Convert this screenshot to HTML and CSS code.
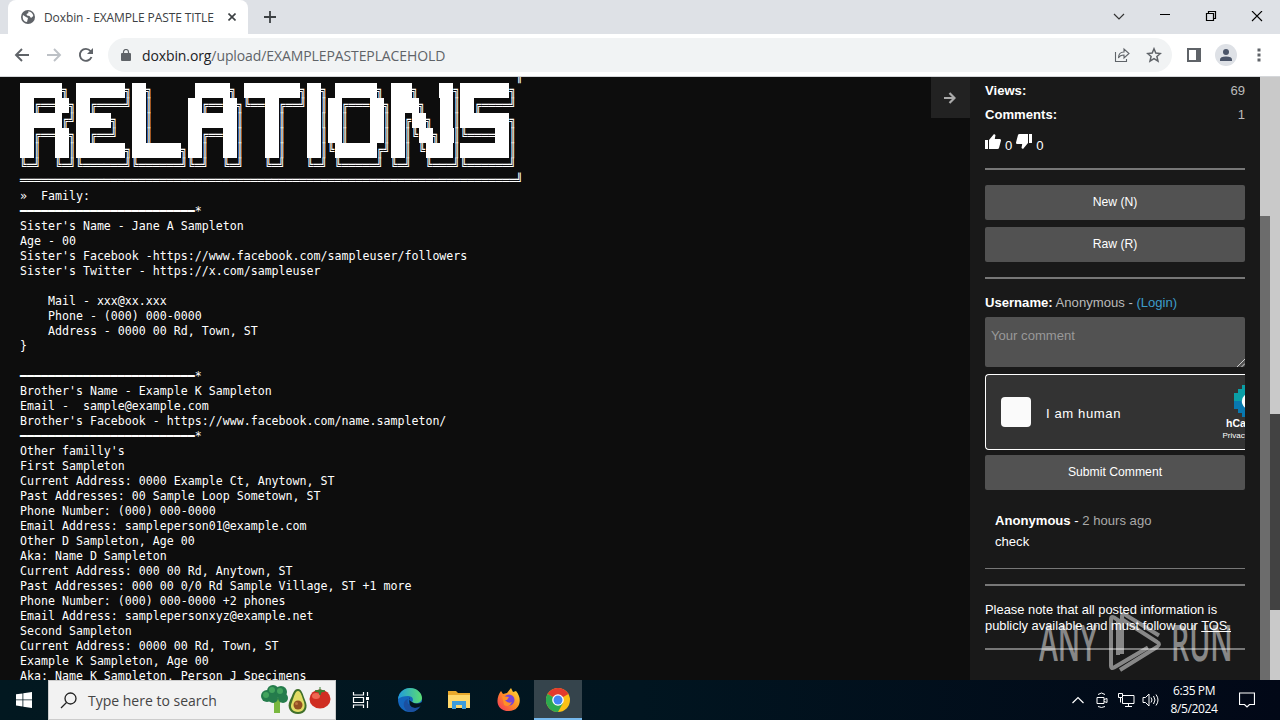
FILE: index.html
```html
<!DOCTYPE html>
<html lang="en">
<head>
    <meta charset="UTF-8">
    <title>Doxbin</title>
    <link rel="stylesheet" href="styles.css">
</head>
<body>
    <div class="tabstrip">
        <div class="tab">
            <svg width="14" height="14" viewBox="0 0 14 14"><circle cx="7" cy="7" r="7" fill="#5f6368"/><path d="M2 5l3 2 2 1-1 4C3 12 1 9 2 5zM7 1.500c3 0 5 2 5.300 4.500L10 8 8.500 6 6 5.500 5.500 4 7.500 3z" fill="#fff"/></svg>
            <span class="tab-title">Doxbin - EXAMPLE PASTE TITLE</span>
            <svg width="8" height="8" viewBox="0 0 8 8"><path d="M.5.5l7 7M7.500.5l-7 7" stroke="#3c4043" stroke-width="1.600"/></svg>
        </div>
        <svg class="new-tab" width="12" height="12" viewBox="0 0 12 12"><path d="M6 0v12M0 6h12" stroke="#3c4043" stroke-width="1.800"/></svg>
        <div class="window-buttons">
            <svg width="12" height="12" viewBox="0 0 12 12"><path d="M1 3l5 5 5-5" fill="none" stroke="#333" stroke-width="1.200"/></svg>
            <svg width="12" height="12" viewBox="0 0 12 12"><path d="M1 3.500h10" stroke="#000"/></svg>
            <svg width="12" height="12" viewBox="0 0 12 12"><path d="M1.500 2.500h7v7h-7zM3.500 2.500v-2h7v7h-2" fill="none" stroke="#000" stroke-width="1.200"/></svg>
            <svg width="12" height="12" viewBox="0 0 12 12"><path d="M1 0l10 10M11 0L1 10" stroke="#000" stroke-width="1.100"/></svg>
        </div>
    </div>
    <div class="toolbar">
        <div class="nav">
            <svg width="16" height="16" viewBox="0 0 16 16"><path d="M15 8H2M8 2L2 8l6 6" fill="none" stroke="#5f6368" stroke-width="1.900"/></svg>
            <svg width="16" height="16" viewBox="0 0 16 16"><path d="M1 8h13M8 2l6 6-6 6" fill="none" stroke="#bdc1c6" stroke-width="1.900"/></svg>
            <svg width="16" height="16" viewBox="0 0 16 16"><path d="M13.500 10A6 6 0 1 1 12.500 4L14 5.500" fill="none" stroke="#5f6368" stroke-width="1.900"/><path d="M15 1v6H9z" fill="#5f6368"/></svg>
        </div>
        <div class="address">
            <svg width="10" height="12" viewBox="0 0 10 12"><path d="M1 4h8q1 0 1 1v6q0 1-1 1H1q-1 0-1-1V5q0-1 1-1z" fill="#5f6368"/><path d="M2.500 5V3a2.500 2.500 0 0 1 5 0v2" fill="none" stroke="#5f6368" stroke-width="1.200"/></svg>
            <span class="url"><b>doxbin.org</b>/upload/EXAMPLEPASTEPLACEHOLD</span>
            <svg width="16" height="16" viewBox="0 0 16 16"><path d="M1.500 5v9.500h11V12M4.500 11q0-6 5.500-6V2l5 4.500-5 4.500V8q-4 0-5.500 3z" fill="none" stroke="#5f6368" stroke-width="1.100"/></svg>
            <svg width="16" height="16" viewBox="0 0 16 16"><path d="M8 1.800l1.800 4.300 4.600.4-3.500 3 1.100 4.600-4-2.500-4 2.500 1.100-4.600-3.500-3 4.600-.4z" fill="none" stroke="#5f6368" stroke-width="1.500"/></svg>
        </div>
        <svg class="panel-icon" width="14" height="14" viewBox="0 0 14 14"><path d="M1 1h12v12H1z" fill="none" stroke="#5f6368" stroke-width="2"/><path d="M9 0h5v14H9z" fill="#5f6368"/></svg>
        <svg class="avatar" width="22" height="22" viewBox="0 0 22 22"><circle cx="11" cy="11" r="11" fill="#dee1e6"/><circle cx="11" cy="8" r="3" fill="#4a5468"/><path d="M5 17v-1.500q0-3 6-3t6 3V17z" fill="#4a5468"/></svg>
        <svg width="4" height="14" viewBox="0 0 4 14"><path d="M.5.5h3v3h-3zM.5 5.500h3v3h-3zM.5 10.500h3v3h-3z" fill="#5f6368"/></svg>
    </div>

    <div class="page">
        <div class="paste">
<pre class="banner">                                                                       ║
██████╗ ███████╗██╗      █████╗ ████████╗██╗ ██████╗ ███╗   ██╗███████╗
██╔══██╗██╔════╝██║     ██╔══██╗╚══██╔══╝██║██╔═══██╗████╗  ██║██╔════╝
██████╔╝█████╗  ██║     ███████║   ██║   ██║██║   ██║██╔██╗ ██║███████╗
██╔══██╗██╔══╝  ██║     ██╔══██║   ██║   ██║██║   ██║██║╚██╗██║╚════██║
██║  ██║███████╗███████╗██║  ██║   ██║   ██║╚██████╔╝██║ ╚████║███████║
╚═╝  ╚═╝╚══════╝╚══════╝╚═╝  ╚═╝   ╚═╝   ╚═╝ ╚═════╝ ╚═╝  ╚═══╝╚══════╝
═══════════════════════════════════════════════════════════════════════╝</pre>
<pre class="text">»  Family:
━━━━━━━━━━━━━━━━━━━━━━━━━*
Sister's Name - Jane A Sampleton
Age - 00
Sister's Facebook -https://www.facebook.com/sampleuser/followers
Sister's Twitter - https://x.com/sampleuser

    Mail - xxx@xx.xxx
    Phone - (000) 000-0000
    Address - 0000 00 Rd, Town, ST
}

━━━━━━━━━━━━━━━━━━━━━━━━━*
Brother's Name - Example K Sampleton
Email -  sample@example.com
Brother's Facebook - https://www.facebook.com/name.sampleton/
━━━━━━━━━━━━━━━━━━━━━━━━━*
Other familly's
First Sampleton
Current Address: 0000 Example Ct, Anytown, ST
Past Addresses: 00 Sample Loop Sometown, ST
Phone Number: (000) 000-0000
Email Address: sampleperson01@example.com
Other D Sampleton, Age 00
Aka: Name D Sampleton
Current Address: 000 00 Rd, Anytown, ST
Past Addresses: 000 00 0/0 Rd Sample Village, ST +1 more
Phone Number: (000) 000-0000 +2 phones
Email Address: samplepersonxyz@example.net
Second Sampleton
Current Address: 0000 00 Rd, Town, ST
Example K Sampleton, Age 00
Aka: Name K Sampleton, Person J Specimens</pre>
        </div>
        <div class="toggle">
            <svg width="12" height="12" viewBox="0 0 12 12"><path d="M0 6h10M5.500 1l5 5-5 5" fill="none" stroke="#aaa" stroke-width="2.200"/></svg>
        </div>
        <div class="sidebar">
            <div class="stat"><b>Views:</b><span>69</span></div>
            <div class="stat"><b>Comments:</b><span>1</span></div>
            <div class="votes">
                <svg width="16" height="16" viewBox="0 0 16 16"><path d="M0 6h3v9H0zM4 6l5-6 1.500 1-.7 4H15q1 0 1 1.500L14 14q-.3 1-1.500 1H4z" fill="#fff"/></svg>
                <span>0</span>
                <svg width="16" height="16" viewBox="0 0 16 16"><path d="M16 9h-3V0h3zM12 9l-5 6-1.500-1 .7-4H1Q0 10 0 8.500L2 1q.3-1 1.500-1H12z" fill="#fff"/></svg>
                <span>0</span>
            </div>
            <hr>
            <div class="actions">
                <div class="button">New (N)</div>
                <div class="button">Raw (R)</div>
            </div>
            <hr>
            <div class="user"><b>Username:</b> Anonymous - <a>(Login)</a></div>
            <div class="comment-box">Your comment
                <svg width="8" height="8" viewBox="0 0 8 8"><path d="M0 8l8-8M4.500 8L8 4.500" stroke="#ccc"/></svg>
            </div>
            <div class="captcha">
                <div class="check"></div>
                <span class="human">I am human</span>
                <div class="brand">
                    <svg width="32" height="32" viewBox="0 0 32 32"><path d="M8 0h16v4h4v4h4v16h-4v4h-4v4H8v-4H4v-4H0V8h4V4h4z" fill="#0a9fa6"/><path d="M0 16h8v12H4v-4H0zM8 20h8v12H8z" fill="#0878b0"/><path d="M12 9q-5 4-4 9 2 6 8 7h8V9z" fill="#fff"/></svg>
                    <b>hCaptcha</b>
                    <span>Privacy - Terms</span>
                </div>
            </div>
            <div class="button">Submit Comment</div>
            <div class="comment">
                <div><b>Anonymous</b> - <span>2 hours ago</span></div>
                <div class="body">check</div>
            </div>
            <hr class="thin">
            <hr class="second">
            <div class="note">Please note that all posted information is<br>publicly available and must follow our <u>TOS.</u></div>
            <hr class="last">
        </div>
        <div class="inner-scroll"><div class="inner-thumb"></div></div>
        <div class="outer-scroll"><div class="outer-thumb"></div></div>
        <div class="watermark">
            <span>ANY</span>
            <svg width="56" height="62" viewBox="0 0 56 62"><path d="M4 55V8q0-3 3-1.500L11 9v35M4 55q0 3 3 1.500l34-20M15 5q0-3 3-1.500l34 21M15 5v38M13 59l37-23q4-3 0-5L16 9" fill="none" stroke="#fff" stroke-width="4"/></svg>
            <span>RUN</span>
        </div>
    </div>

    <div class="taskbar">
        <div class="start">
            <svg width="16" height="16" viewBox="0 0 16 16"><path d="M0 2.300l6.500-.9v6.100H0zM7.300 1.200L16 0v7.500H7.300zM0 8.300h6.500v6.200L0 13.600zM7.300 8.300H16V16l-8.700-1.300z" fill="#fff"/></svg>
        </div>
        <div class="search">
            <svg width="17" height="17" viewBox="0 0 17 17"><circle cx="10.500" cy="6.500" r="5.500" fill="none" stroke="#222" stroke-width="1.300"/><path d="M6.500 10.500L1 16" stroke="#222" stroke-width="1.300"/></svg>
            <span>Type here to search</span>
            <svg class="food" width="72" height="32" viewBox="0 0 72 32">
                <path d="M10 14l4 5v10h6V19l5-6z" fill="#79b83f"/>
                <g fill="#257c4c"><circle cx="7" cy="12" r="6"/><circle cx="13" cy="7" r="6"/><circle cx="21" cy="8" r="6"/><circle cx="23" cy="14" r="5"/><circle cx="13" cy="14" r="5"/></g>
                <g fill="#43a35d"><circle cx="12" cy="6" r="3"/><circle cx="20" cy="7" r="3"/><circle cx="6" cy="11" r="3"/></g>
                <path d="M38 5c4 0 5 6 7 11 4 8 0 14-7 14s-12-6-8-14c3-5 3-11 8-11z" fill="#40702a"/>
                <path d="M38 7c3 0 4 6 6 11 2 6-1 10-6 10s-9-4-6-10c2-5 3-11 6-11z" fill="#e2dc65"/>
                <circle cx="38" cy="21" r="4.500" fill="#925022"/><circle cx="36.500" cy="19.500" r="1.500" fill="#bd7941"/>
                <ellipse cx="60" cy="15" rx="10.500" ry="9.500" fill="#cf2e22"/><ellipse cx="56" cy="12" rx="4" ry="3" fill="#ee6852"/>
                <path d="M60 3v4M55 7l5-1 5 1-4 1-1 3-1-3z" fill="#3a8034" stroke="#3a8034"/>
            </svg>
        </div>
        <div class="apps">
            <div class="app">
                <svg width="18" height="16" viewBox="0 0 18 16"><path d="M1.500 0v3h10V0M1.500 16v-3h10v3M1.500 5.500h10v5h-10zM15.500 0v4M15.500 9v7" fill="none" stroke="#fff" stroke-width="1.200"/><path d="M14 5h3v3h-3z" fill="#fff"/></svg>
            </div>
            <div class="app">
                <svg width="24" height="24" viewBox="0 0 24 24"><defs><linearGradient id="edge"><stop offset="0" stop-color="#209bdd"/><stop offset="1" stop-color="#5bdd72"/></linearGradient></defs><circle cx="12" cy="12" r="12" fill="#1466bd"/><path d="M0 11C1 4 6 0 12 0c7 0 12 5 12 10 0 5-7 7-10 4 2-2 1-6-4-6-4 0-8 1-10 3z" fill="url(#edge)"/><path d="M10 11c-2 5 3 9 12 7-3 6-9 7-13 5-5-4-4-11 1-12z" fill="#1b50a0"/><path d="M14 14q-4-2-2-5-3 10 5 11 4 0 7-3V14q-5 3-10 0z" fill="#04151f"/></svg>
            </div>
            <div class="app">
                <svg width="22" height="20" viewBox="0 0 22 20"><path d="M0 1h8l2 2h12v15H0z" fill="#e9a92c"/><path d="M0 5h22v13H0z" fill="#ffd86b"/><path d="M4 11h14v8h-4v-4H8v4H4z" fill="#3d9cdb"/></svg>
            </div>
            <div class="app">
                <svg width="24" height="24" viewBox="0 0 24 24"><defs><linearGradient id="fox" x1="1" y1="0" x2="0" y2="1"><stop offset="0" stop-color="#ffe436"/><stop offset=".5" stop-color="#ff8b25"/><stop offset="1" stop-color="#f22e62"/></linearGradient></defs><path d="M4 3l2 3 4-1 4-5 2 4 3-1c7 8 4 20-7 20C-1 23-2 11 4 3z" fill="url(#fox)"/><circle cx="12" cy="12" r="5.500" fill="#7844d5"/><path d="M5 8l7 1-2 3H8q3 4 7 2-3 6-8 3z" fill="#ff8f27"/></svg>
            </div>
            <div class="app active">
                <svg width="24" height="24" viewBox="0 0 24 24"><circle cx="12" cy="12" r="12" fill="#fbc116"/><path d="M12 12L1.600 6a12 12 0 0 1 20.800 0z" fill="#e33b2e"/><path d="M12 12L1.600 6A12 12 0 0 0 12 24l5-9z" fill="#2da94f"/><circle cx="12" cy="12" r="5.800" fill="#fff"/><circle cx="12" cy="12" r="4.500" fill="#4285f4"/></svg>
            </div>
        </div>
        <div class="tray">
            <svg width="12" height="16" viewBox="0 0 12 16"><path d="M.5 11L6 5.500l5.500 5.500" fill="none" stroke="#fff" stroke-width="1.200"/></svg>
            <svg width="12" height="16" viewBox="0 0 12 16"><path d="M1 5.500h7v6H1zM8 7.500l3-1v4l-3-1M2 2.500q3.500-3 7 0M2 14.500q3.500 2 7 0" fill="none" stroke="#fff"/></svg>
            <svg width="17" height="16" viewBox="0 0 17 16"><path d="M5 3.500h11v8H4.500V6M10.500 11.500v3M7 14.500h7M.5 1.500h4v4h-4zM2.500 5.500v5" fill="none" stroke="#fff"/></svg>
            <svg width="17" height="16" viewBox="0 0 17 16"><path d="M1 5.500h2.500L7 2v12l-3.500-3.500H1zM9 5.500q2 2.500 0 5M11.500 4q3 4 0 8M14 2.500q4 5.500 0 11" fill="none" stroke="#fff"/></svg>
            <div class="clock">6:35 PM<br>8/5/2024</div>
            <svg class="notice" width="16" height="16" viewBox="0 0 16 16"><path d="M.5 1h15v11.500h-5L8 15l-2.500-2.500h-5z" fill="none" stroke="#fff" stroke-width="1.200"/></svg>
        </div>
    </div>

    <script>
        // fill runs of full blocks so no seams show between them
        const banner = document.querySelector('.banner');
        banner.innerHTML = banner.textContent.replace(/█+/g, '<i>$&</i>');
    </script>
</body>
</html>
```

FILE: styles.css
```css
* {
    box-sizing: border-box;
}
body {
    margin: 0;
    width: 1280px;
    height: 720px;
    overflow: hidden;
    display: flex;
    flex-direction: column;
    font-family: "Open Sans", "Noto Sans", sans-serif;
    background: #0d0d0d;
}
svg {
    flex: none;
    display: block;
}
.tabstrip {
    height: 34px;
    background: #dee1e6;
    display: flex;
    align-items: center;
    padding-left: 8px;
}
.tab {
    width: 240px;
    height: 34px;
    background: #fff;
    border-radius: 8px 8px 0 0;
    display: flex;
    align-items: center;
    padding: 0 12px 0 13px;
}
.tab-title {
    width: 172px;
    margin: 0 14px 0 9px;
    font-size: 12px;
    letter-spacing: -0.1px;
    color: #3c4043;
    white-space: nowrap;
    overflow: hidden;
}
.new-tab {
    margin-left: 16px;
}
.window-buttons {
    margin-left: auto;
    margin-right: 17px;
    display: flex;
    gap: 34px;
}
.toolbar {
    height: 43px;
    background: #fff;
    border-bottom: 1px solid #d5d7da;
    display: flex;
    align-items: center;
    padding: 0 19px 0 14px;
}
.nav {
    display: flex;
    gap: 16px;
    width: 94px;
}
.address {
    width: 1065px;
    height: 34px;
    border-radius: 17px;
    background: #f1f3f4;
    display: flex;
    align-items: center;
    gap: 16px;
    padding: 0 10px 0 13px;
}
.url {
    flex: 1;
    margin-left: -5px;
    font-size: 14px;
    letter-spacing: -0.1px;
    color: #5f6368;
}
.url b {
    font-weight: 400;
    color: #202124;
}
.panel-icon {
    margin-left: 15px;
}
.avatar {
    margin: 0 20px 0 14px;
}

.page {
    position: relative;
    height: 603px;
    display: flex;
    overflow: hidden;
}
.paste {
    width: 931px;
    padding-left: 20px;
    overflow: hidden;
}
pre {
    margin: 0;
    color: #fff;
    font-family: "DejaVu Sans Mono", monospace;
    font-size: 11.627px;
}
.banner {
    height: 120px;
    margin-top: -9px;
    line-height: 13px;
    transform: scaleY(1.15385);
    transform-origin: 0 0;
}
.banner i {
    display: inline-block;
    height: 13px;
    overflow: hidden;
    vertical-align: top;
    font-style: normal;
    background: #fff;
}
.text {
    padding-top: 1px;
    line-height: 15px;
}
.toggle {
    width: 39px;
    height: 41px;
    background: #222;
    display: flex;
    align-items: center;
    padding-left: 13px;
}
.sidebar {
    width: 290px;
    background: #191919;
    padding: 2px 15px 0;
    font-family: "Liberation Sans", Arial, sans-serif;
    font-size: 13.1px;
    color: #fff;
    overflow: hidden;
}
.stat {
    height: 24px;
    line-height: 24px;
    display: flex;
    justify-content: space-between;
}
.stat span {
    color: #bbb;
}
.votes {
    height: 32px;
    padding-top: 7px;
    display: flex;
    gap: 4px;
}
.votes span {
    line-height: 25px;
    margin-top: -1px;
}
.sidebar hr {
    height: 2px;
    margin: 9px 0 15px;
    border: 0;
    background: #777;
}
.button {
    height: 35px;
    border-radius: 2px;
    background: #525252;
    font-size: 12.2px;
    line-height: 35px;
    text-align: center;
}
.actions {
    display: grid;
    gap: 7px;
    margin-bottom: 15px;
}
.user {
    height: 23px;
    line-height: 18px;
    color: #bbb;
}
.user b {
    color: #fff;
}
.user a {
    color: #3d9dc9;
}
.comment-box {
    height: 50px;
    border-radius: 2px;
    background: #525252;
    color: #999;
    padding: 0 0 0 6px;
    line-height: 37px;
    display: flex;
    justify-content: space-between;
}
.comment-box svg {
    align-self: flex-end;
}
.captcha {
    height: 76px;
    margin: 7px 0 5px;
    border: 1px solid #fff;
    border-right: 0;
    border-radius: 4px 0 0 4px;
    background: #333;
    display: flex;
    align-items: center;
    padding-left: 15px;
    overflow: hidden;
}
.check {
    flex: none;
    width: 30px;
    height: 30px;
    border-radius: 4px;
    background: #fafafa;
}
.human {
    flex: none;
    width: 174px;
    margin: 3px 0 0 15px;
    font-size: 13.1px;
    letter-spacing: 0.6px;
}
.brand {
    flex: none;
    display: flex;
    flex-direction: column;
    align-items: center;
    width: 60px;
    font-size: 10.5px;
    white-space: nowrap;
}
.brand span {
    font-size: 8px;
    margin-top: 2px;
}
.comment {
    padding: 22px 10px 0;
    height: 78px;
    line-height: 17px;
}
.comment span {
    color: #aaa;
}
.comment .body {
    margin-top: 4px;
}
.sidebar .thin {
    height: 1px;
    margin: 0;
}
.sidebar .second {
    margin: 15px 0 16px;
}
.note {
    font-size: 12.9px;
    line-height: 16px;
    white-space: nowrap;
}
.sidebar .last {
    margin: 14px 0 0;
}
.inner-scroll {
    width: 10px;
    background: #c9c9c9;
}
.inner-thumb {
    height: 464px;
    margin-top: 139px;
    background: #6c6c6c;
}
.outer-scroll {
    width: 10px;
    background: #c9c9c9;
}
.outer-thumb {
    height: 196px;
    margin-top: 337px;
    background: #424242;
}
.watermark {
    position: absolute;
    left: 1039px;
    top: 534px;
    display: flex;
    align-items: center;
    gap: 8px;
    opacity: 0.48;
    color: #fff;
}
.watermark span {
    width: 60px;
    font-family: "Open Sans", sans-serif;
    font-size: 50px;
    font-weight: 600;
    line-height: 62px;
    transform: scaleX(0.57);
    transform-origin: 0 0;
}

.taskbar {
    height: 40px;
    display: flex;
    background: linear-gradient(90deg, #021820, #011520 50%, #020817);
    color: #fff;
}
.start {
    width: 48px;
    display: flex;
    align-items: center;
    justify-content: center;
}
.search {
    width: 288px;
    background: #f2f2f2;
    border: 1px solid #ccc;
    display: flex;
    align-items: center;
    padding-left: 11px;
    color: #444;
    font-size: 14px;
}
.search span {
    width: 172px;
    margin-left: 11px;
    white-space: nowrap;
}
.apps {
    display: flex;
    gap: 1px;
    margin-left: 1px;
}
.app {
    width: 48px;
    display: flex;
    align-items: center;
    justify-content: center;
}
.app + .app {
    width: 48.25px;
}
.active {
    background: #35444c;
    border-bottom: 2px solid #76b9ed;
    padding-top: 2px;
}
.tray {
    margin-left: auto;
    display: flex;
    align-items: center;
    padding-right: 25px;
}
.tray svg {
    margin-right: 12px;
}
.tray svg:nth-child(2) {
    margin-right: 10px;
}
.tray svg:nth-child(3) {
    margin-right: 7px;
}
.tray svg:nth-child(4) {
    margin-right: 6px;
}
.clock {
    width: 58px;
    font-size: 12px;
    line-height: 18px;
    letter-spacing: -0.4px;
    text-align: center;
}
.tray .notice {
    margin: 0 0 0 16px;
}
```
